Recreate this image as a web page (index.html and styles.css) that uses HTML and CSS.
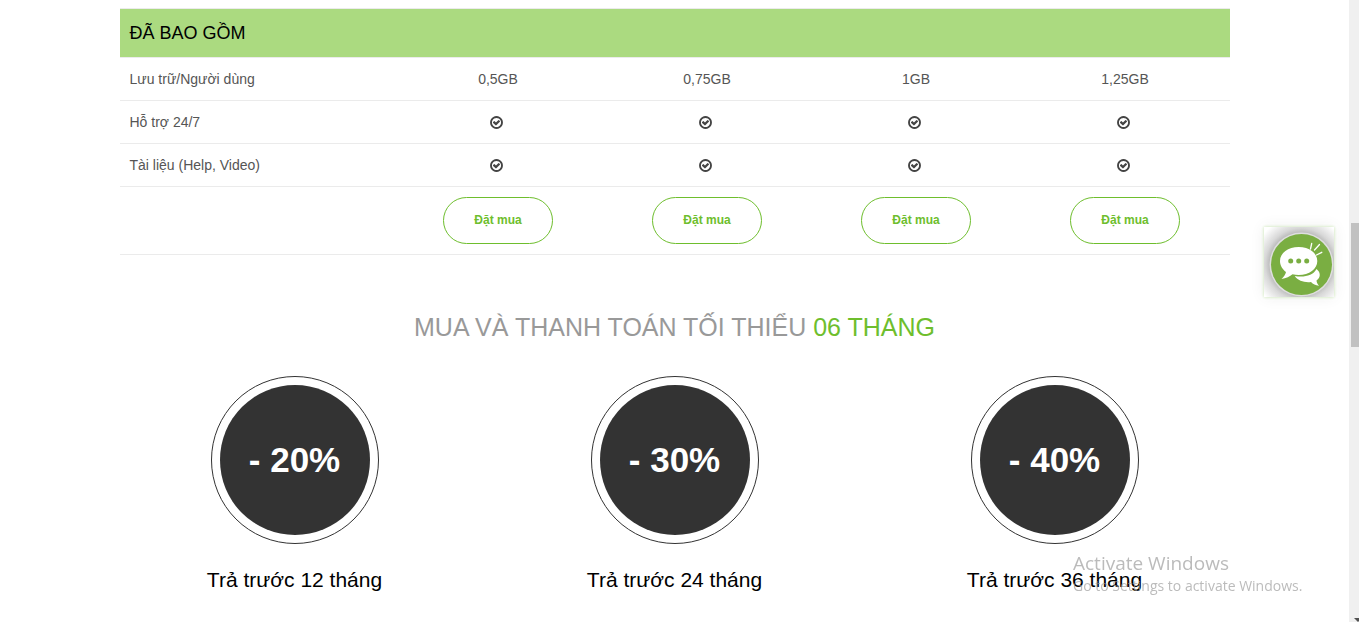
FILE: index.html
```
<!DOCTYPE html>
<html lang="vi">

<head>
     <meta charset="UTF-8">
     <meta name="viewport" content="width=device-width, initial-scale=1.0">
     <title>Bảng giá</title>
     <link rel="stylesheet" href="styles.css">
</head>

<body>
     <svg class="sprite" aria-hidden="true">
          <symbol id="check" viewBox="0 0 1792 1792">
               <path d="M1299 813l-422 422q-19 19-45 19t-45-19l-294-294q-19-19-19-45t19-45l102-102q19-19 45-19t45 19l147 147 275-275q19-19 45-19t45 19l102 102q19 19 19 45t-19 45zm141 83q0-148-73-273t-198-198-273-73-273 73-198 198-73 273 73 273 198 198 273 73 273-73 198-198 73-273zm224 0q0 209-103 385.5t-279.5 279.5-385.5 103-385.5-103-279.5-279.5-103-385.5 103-385.5 279.5-279.5 385.5-103 385.5 103 279.5 279.5 103 385.5z"/>
          </symbol>
     </svg>
     <main class="page">
          <div class="container">
               <table class="pricing">
                    <colgroup>
                         <col>
                         <col class="plan" span="4">
                    </colgroup>
                    <thead>
                         <tr>
                              <th class="group" colspan="5">ĐÃ BAO GỒM</th>
                         </tr>
                    </thead>
                    <tbody>
                         <tr>
                              <th class="feature" scope="row">Lưu trữ/Người dùng</th>
                              <td>0,5GB</td>
                              <td>0,75GB</td>
                              <td>1GB</td>
                              <td>1,25GB</td>
                         </tr>
                         <tr>
                              <th class="feature" scope="row">Hỗ trợ 24/7</th>
                              <td><svg class="check"><use href="#check"/></svg></td>
                              <td><svg class="check"><use href="#check"/></svg></td>
                              <td><svg class="check"><use href="#check"/></svg></td>
                              <td><svg class="check"><use href="#check"/></svg></td>
                         </tr>
                         <tr>
                              <th class="feature" scope="row">Tài liệu (Help, Video)</th>
                              <td><svg class="check"><use href="#check"/></svg></td>
                              <td><svg class="check"><use href="#check"/></svg></td>
                              <td><svg class="check"><use href="#check"/></svg></td>
                              <td><svg class="check"><use href="#check"/></svg></td>
                         </tr>
                         <tr>
                              <td class="feature"></td>
                              <td><a class="buy" href="#">Đặt mua</a></td>
                              <td><a class="buy" href="#">Đặt mua</a></td>
                              <td><a class="buy" href="#">Đặt mua</a></td>
                              <td><a class="buy" href="#">Đặt mua</a></td>
                         </tr>
                    </tbody>
               </table>
          </div>
          <section class="discounts">
               <h2 class="title">MUA VÀ THANH TOÁN TỐI THIỂU <span>06 THÁNG</span></h2>
               <div class="offers">
                    <div class="offer">
                         <div class="circle">- 20%</div>
                         <p>Trả trước 12 tháng</p>
                    </div>
                    <div class="offer">
                         <div class="circle">- 30%</div>
                         <p>Trả trước 24 tháng</p>
                    </div>
                    <div class="offer">
                         <div class="circle">- 40%</div>
                         <p>Trả trước 36 tháng</p>
                    </div>
               </div>
          </section>
     </main>

     <button class="chat" aria-label="Chat">
          <svg viewBox="0 0 70 70">
               <circle cx="37.500" cy="37.500" r="32" fill="#dedede"/>
               <circle cx="37.500" cy="37.500" r="30.500" fill="#7aae42"/>
               <path d="M34.700 20c-10.500 0-18.700 6-18.700 14 0 4.500 2.500 8.500 6 11-.5 2.500-2 4.500-4.500 7 4.500-.5 8.500-2.500 11-4.700 2 .5 4 .7 6.200.7 10.500 0 18.600-6 18.600-14s-8.100-14-18.600-14z" fill="#fff"/>
               <path d="M52.500 42c4.500 3.500 4.300 8.500 0 11.500.2 2 1 3.500 2.500 5.200-3.500-.2-6-1.700-8-3.700-6 .8-13-1-16.300-6 9 1.500 18.300 0 21.800-7z" fill="#fff"/>
               <path d="M46.500 22l1.200-5.500M50.500 23l5-5.500M52.500 28l5.300-2.700" stroke="#fff" stroke-width="1.300" stroke-linecap="round"/>
               <g fill="#7aae42">
                    <circle cx="26.700" cy="34" r="2.500"/>
                    <circle cx="34.700" cy="34" r="2.500"/>
                    <circle cx="42.700" cy="34" r="2.500"/>
               </g>
          </svg>
     </button>

     <div class="activate">
          <p class="activate-title">Activate Windows</p>
          <p>Go to Settings to activate Windows.</p>
     </div>

     <div class="scrollbar">
          <div class="thumb"></div>
          <svg class="arrow" viewBox="0 0 8 4"><path d="M0 0h8l-4 4z"/></svg>
     </div>
</body>

</html>
```
FILE: styles.css
```
* {
     margin: 0px;
     padding: 0px;
     box-sizing: border-box;
}

body {
     height: 100vh;
     overflow: hidden;
     font-family: "Liberation Sans", Arial, sans-serif;
     font-size: 14px;
     line-height: 22px;
     color: #555;
     background-color: #fff;
}

.sprite {
     display: none;
}

.page {
     padding: 8px 10px 0px 0px;
}

.container {
     max-width: 1140px;
     padding: 0px 15px;
     margin: 0px auto;
}

.pricing {
     width: 100%;
     table-layout: fixed;
     border-collapse: collapse;

     .plan {
          width: 209px;
     }

     th, td {
          padding: 10px;
          border-top: 1px solid #ebebeb;
          border-bottom: 1px solid #ebebeb;
          text-align: center;
          font-weight: 400;
          vertical-align: middle;
     }

     .group {
          padding: 12px 10px;
          background-color: #abda80;
          color: #000;
          font-size: 18px;
          line-height: 24px;
          text-align: left;
     }

     .feature {
          text-align: left;
     }

     td:has(.check) {
          padding-right: 13px;
     }
}

.check {
     display: block;
     width: 15px;
     height: 15px;
     margin: 0px auto;
     fill: #444;
}

.buy {
     display: block;
     width: 110px;
     margin: 0px auto;
     padding: 12px 0px;
     border: 1px solid #6ebe2d;
     border-radius: 24px;
     color: #6ebe2d;
     font-size: 12px;
     font-weight: 700;
     line-height: 21px;
     text-decoration: none;
}

.discounts {
     max-width: 1140px;
     margin: 0px auto;
     padding-top: 56px;
     text-align: center;
}

.title {
     color: #999;
     font-size: 25px;
     font-weight: 400;
     line-height: 32px;

     span {
          color: #6ebe2d;
     }
}

.offers {
     display: grid;
     grid-template-columns: repeat(3, 1fr);
     padding-top: 33px;
}

.offer {
     display: flex;
     flex-direction: column;
     align-items: center;
     gap: 24px;
     color: #000;
     font-size: 21px;
     line-height: 24px;
}

.circle {
     display: flex;
     justify-content: center;
     align-items: center;
     width: 168px;
     height: 168px;
     padding: 8px;
     border: 1px solid #333;
     border-radius: 50%;
     background-color: #333;
     background-clip: content-box;
     color: #fff;
     font-size: 35px;
     font-weight: 700;
}

.chat {
     position: fixed;
     right: 25px;
     top: 227px;
     width: 70px;
     height: 70px;
     border: none;
     background: radial-gradient(circle at 37px 37px, #aaa 28px, #d8d8d8 36px, #fff 48px);
     box-shadow: 0px 0px 3px #c9e8b0, 0px 0px 14px rgba(0, 0, 0, 0.08);
     cursor: pointer;

     svg {
          display: block;
          width: 70px;
          height: 70px;
          fill: none;
     }
}

.activate {
     position: fixed;
     left: calc(100% - 286px);
     bottom: 25px;
     color: rgba(150, 150, 150, 0.65);
     font-family: "Open Sans", "Noto Sans", sans-serif;
     font-size: 14px;
     line-height: 22px;
     pointer-events: none;
}

.activate-title {
     font-size: 19px;
     line-height: 24px;
}

.scrollbar {
     position: fixed;
     top: 0px;
     right: 0px;
     width: 10px;
     height: 100%;
     background-color: #f0f0f0;

     .thumb {
          position: absolute;
          top: 223px;
          right: 0px;
          width: 8px;
          height: 124px;
          background-color: #c1c1c1;
     }

     .arrow {
          position: absolute;
          right: -3px;
          bottom: 0px;
          width: 8px;
          height: 4px;
          fill: #505050;
     }
}
```
